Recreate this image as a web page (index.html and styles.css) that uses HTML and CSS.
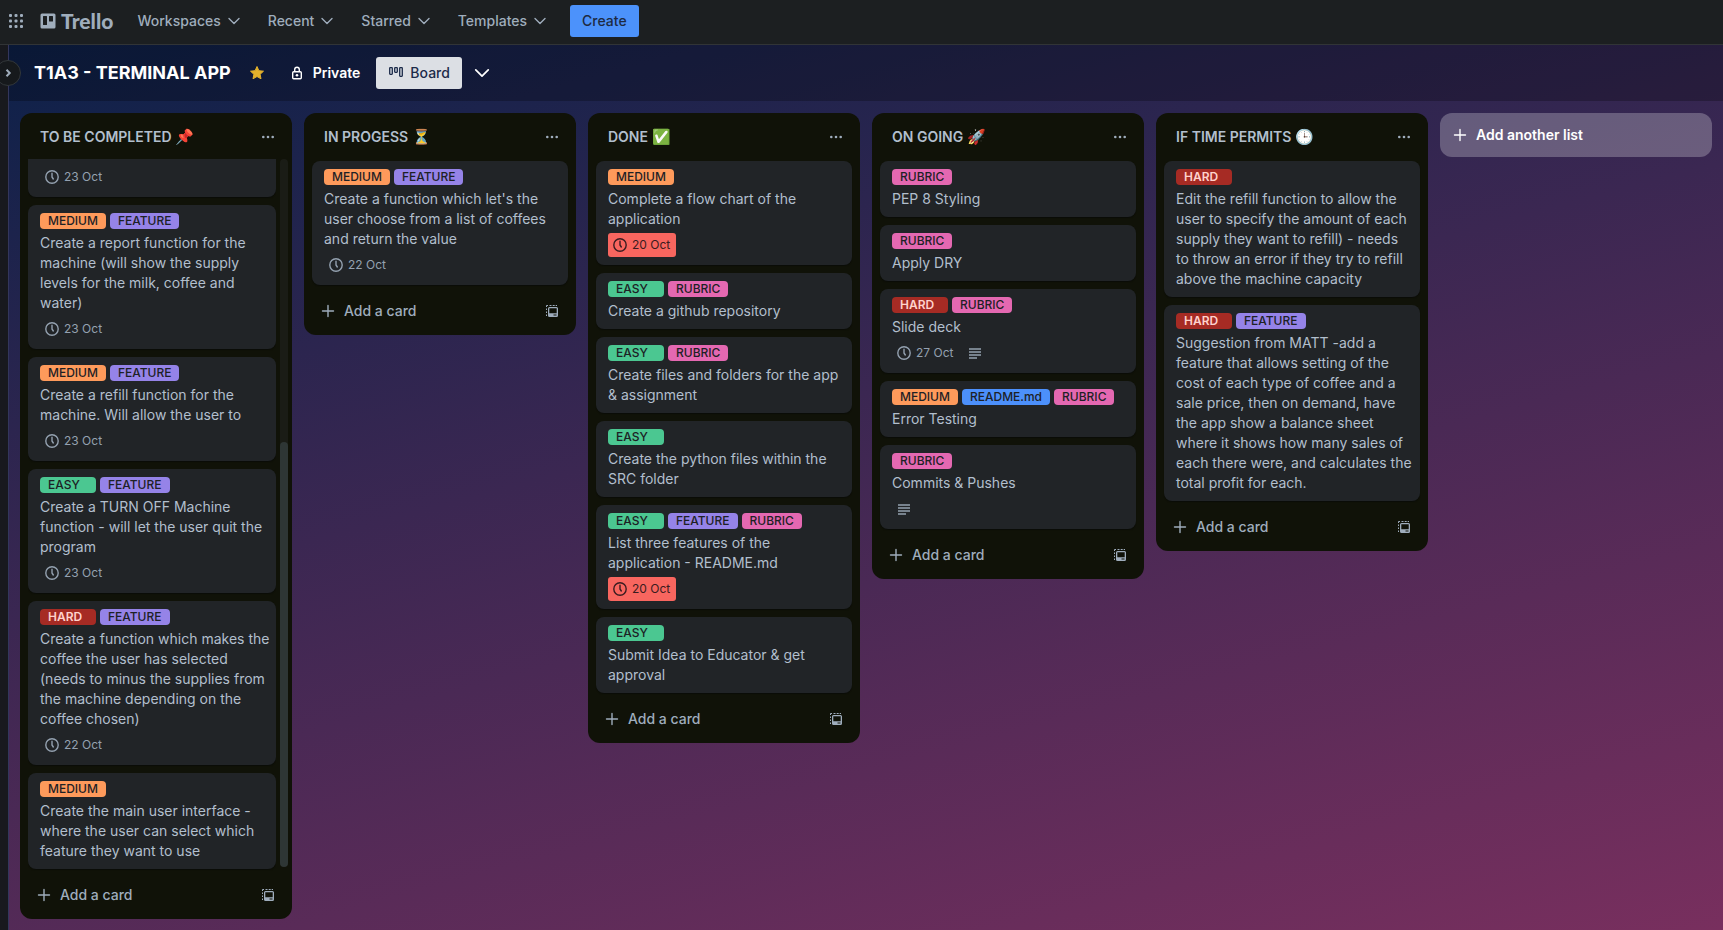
FILE: index.html
```
<!DOCTYPE html>
<html lang="en">
<head>
<meta charset="utf-8">
<title>T1A3 - TERMINAL APP | Trello</title>
<link rel="stylesheet" href="styles.css">
</head>
<body>
<svg class="sprite" aria-hidden="true">
  <symbol id="chevron" viewBox="0 0 16 16"><path d="M3 5.500 8 10.500l5-5" fill="none" stroke="currentColor" stroke-width="1.400" stroke-linecap="round" stroke-linejoin="round"/></symbol>
  <symbol id="clock" viewBox="0 0 16 16"><circle cx="8" cy="8" r="6.200" fill="none" stroke="currentColor" stroke-width="1.400"/><path d="M8 4.300V8l1.300 2" fill="none" stroke="currentColor" stroke-width="1.400" stroke-linecap="round" stroke-linejoin="round"/></symbol>
  <symbol id="lines" viewBox="0 0 16 16"><path d="M2 4h12M2 7h12M2 10h12M2 13h8" fill="none" stroke="currentColor" stroke-width="1.500"/></symbol>
  <symbol id="plus" viewBox="0 0 16 16"><path d="M8 2.500v11M2.500 8h11" fill="none" stroke="currentColor" stroke-width="1.400" stroke-linecap="round"/></symbol>
  <symbol id="dots" viewBox="0 0 16 16"><g fill="currentColor"><circle cx="3.300" cy="8" r="1.300"/><circle cx="8" cy="8" r="1.300"/><circle cx="12.700" cy="8" r="1.300"/></g></symbol>
  <symbol id="template" viewBox="0 0 16 16"><path fill="currentColor" fill-rule="evenodd" d="M5.500 4h7A1.500 1.500 0 0 1 14 5.500v7a1.500 1.500 0 0 1-1.500 1.500h-7A1.500 1.500 0 0 1 4 12.500v-7A1.500 1.500 0 0 1 5.500 4Zm-.2 1.300v5h7.400v-5Zm4.200 6.200v1h3v-1Z"/><path d="M2.500 13v-1.500M2.500 10V8.500M2.500 7V5.500M2.500 4V2.500H4M5.500 2.500H7.500M8.700 2.500h2M11.700 2.500H13" fill="none" stroke="currentColor"/></symbol>
</svg>

<header class="topbar">
  <button class="apps" aria-label="Switch apps"><svg class="icon" viewBox="0 0 16 16"><g fill="currentColor"><rect x="1" y="1" width="3" height="3" rx="1"/><rect x="6.500" y="1" width="3" height="3" rx="1"/><rect x="12" y="1" width="3" height="3" rx="1"/><rect x="1" y="6.500" width="3" height="3" rx="1"/><rect x="6.500" y="6.500" width="3" height="3" rx="1"/><rect x="12" y="6.500" width="3" height="3" rx="1"/><rect x="1" y="12" width="3" height="3" rx="1"/><rect x="6.500" y="12" width="3" height="3" rx="1"/><rect x="12" y="12" width="3" height="3" rx="1"/></g></svg></button>
  <a class="logo" href="#"><svg class="icon" viewBox="0 0 16 16"><path fill="currentColor" fill-rule="evenodd" d="M2 .5h12A1.500 1.500 0 0 1 15.500 2v12a1.500 1.500 0 0 1-1.500 1.500H2A1.500 1.500 0 0 1 .5 14V2A1.500 1.500 0 0 1 2 .5ZM3.500 3a.5.5 0 0 0-.5.5v8a.5.5 0 0 0 .5.5h3a.5.5 0 0 0 .5-.5v-8a.5.5 0 0 0-.5-.5Zm6 0a.5.5 0 0 0-.5.5v4.500a.5.5 0 0 0 .5.5h3a.5.5 0 0 0 .5-.5V3.500a.5.5 0 0 0-.5-.5Z"/></svg><span>Trello</span></a>
  <nav class="menu">
    <button>Workspaces<svg class="icon"><use href="#chevron"/></svg></button>
    <button>Recent<svg class="icon"><use href="#chevron"/></svg></button>
    <button>Starred<svg class="icon"><use href="#chevron"/></svg></button>
    <button>Templates<svg class="icon"><use href="#chevron"/></svg></button>
  </nav>
  <button class="create">Create</button>
</header>

<div class="workspace">
  <aside class="sidebar"><button class="expand" aria-label="Expand sidebar"><svg class="icon" viewBox="0 0 16 16"><path d="m6.500 4.800 3.200 3.200-3.200 3.200" fill="none" stroke="currentColor" stroke-width="2"/></svg></button></aside>
  <main class="board">
    <div class="board-bar">
      <h1>T1A3 - TERMINAL APP</h1>
      <button class="star" aria-label="Starred"><svg class="icon" viewBox="0 0 16 16"><path fill="currentColor" stroke="currentColor" stroke-linejoin="round" d="m8 1.500 1.900 4.200 4.600.5-3.400 3.100.9 4.500L8 11.500l-4 2.300.9-4.500L1.500 6.200l4.600-.5Z"/></svg></button>
      <button class="private"><svg class="icon" viewBox="0 0 16 16"><g fill="none" stroke="currentColor" stroke-width="1.400"><rect x="3.700" y="6.700" width="8.600" height="7.100" rx="1"/><path d="M5.700 6.500V4.500a2.300 2.300 0 0 1 4.600 0v2"/></g><circle cx="8" cy="10.200" r="1.300" fill="currentColor"/></svg>Private</button>
      <button class="view"><svg class="icon" viewBox="0 0 16 16"><g fill="none" stroke="currentColor" stroke-width="1.300"><rect x="1.700" y="2.700" width="2.600" height="6.600" rx=".5"/><rect x="6.700" y="2.700" width="2.600" height="4.600" rx=".5"/><rect x="11.700" y="2.700" width="2.600" height="8.600" rx=".5"/></g></svg>Board</button>
      <button class="views" aria-label="More views"><svg class="icon-large"><use href="#chevron"/></svg></button>
    </div>

    <div class="lists">
      <section class="list scrolling">
        <div class="list-head"><h2>TO BE COMPLETED <span class="emoji">📌</span></h2><button aria-label="List actions"><svg class="icon"><use href="#dots"/></svg></button></div>
        <div class="scroll-area">
          <div class="cards">
            <article class="card leading"><div class="badges"><span class="badge"><svg class="icon"><use href="#clock"/></svg>23 Oct</span></div></article>
            <article class="card"><div class="labels"><span class="label orange">MEDIUM</span><span class="label purple">FEATURE</span></div><p>Create a report function for the<br>machine (will show the supply<br>levels for the milk, coffee and<br>water)</p><div class="badges"><span class="badge"><svg class="icon"><use href="#clock"/></svg>23 Oct</span></div></article>
            <article class="card"><div class="labels"><span class="label orange">MEDIUM</span><span class="label purple">FEATURE</span></div><p>Create a refill function for the<br>machine. Will allow the user to</p><div class="badges"><span class="badge"><svg class="icon"><use href="#clock"/></svg>23 Oct</span></div></article>
            <article class="card"><div class="labels"><span class="label green">EASY</span><span class="label purple">FEATURE</span></div><p>Create a TURN OFF Machine<br>function - will let the user quit the<br>program</p><div class="badges"><span class="badge"><svg class="icon"><use href="#clock"/></svg>23 Oct</span></div></article>
            <article class="card"><div class="labels"><span class="label red">HARD</span><span class="label purple">FEATURE</span></div><p>Create a function which makes the<br>coffee the user has selected<br>(needs to minus the supplies from<br>the machine depending on the<br>coffee chosen)</p><div class="badges"><span class="badge"><svg class="icon"><use href="#clock"/></svg>22 Oct</span></div></article>
            <article class="card"><div class="labels"><span class="label orange">MEDIUM</span></div><p>Create the main user interface -<br>where the user can select which<br>feature they want to use</p></article>
          </div>
          <div class="track"><div class="thumb"></div></div>
        </div>
        <div class="list-foot"><button class="add"><svg class="icon"><use href="#plus"/></svg>Add a card</button><button aria-label="Create from template"><svg class="icon"><use href="#template"/></svg></button></div>
      </section>

      <section class="list">
        <div class="list-head"><h2>IN PROGESS <span class="emoji">⏳</span></h2><button aria-label="List actions"><svg class="icon"><use href="#dots"/></svg></button></div>
        <div class="cards">
          <article class="card"><div class="labels"><span class="label orange">MEDIUM</span><span class="label purple">FEATURE</span></div><p>Create a function which let's the<br>user choose from a list of coffees<br>and return the value</p><div class="badges"><span class="badge"><svg class="icon"><use href="#clock"/></svg>22 Oct</span></div></article>
        </div>
        <div class="list-foot"><button class="add"><svg class="icon"><use href="#plus"/></svg>Add a card</button><button aria-label="Create from template"><svg class="icon"><use href="#template"/></svg></button></div>
      </section>

      <section class="list">
        <div class="list-head"><h2>DONE <span class="emoji">✅</span></h2><button aria-label="List actions"><svg class="icon"><use href="#dots"/></svg></button></div>
        <div class="cards">
          <article class="card"><div class="labels"><span class="label orange">MEDIUM</span></div><p>Complete a flow chart of the<br>application</p><div class="badges"><span class="badge overdue"><svg class="icon"><use href="#clock"/></svg>20 Oct</span></div></article>
          <article class="card"><div class="labels"><span class="label green">EASY</span><span class="label pink">RUBRIC</span></div><p>Create a github repository</p></article>
          <article class="card"><div class="labels"><span class="label green">EASY</span><span class="label pink">RUBRIC</span></div><p>Create files and folders for the app<br>&amp; assignment</p></article>
          <article class="card"><div class="labels"><span class="label green">EASY</span></div><p>Create the python files within the<br>SRC folder</p></article>
          <article class="card"><div class="labels"><span class="label green">EASY</span><span class="label purple">FEATURE</span><span class="label pink">RUBRIC</span></div><p>List three features of the<br>application - README.md</p><div class="badges"><span class="badge overdue"><svg class="icon"><use href="#clock"/></svg>20 Oct</span></div></article>
          <article class="card"><div class="labels"><span class="label green">EASY</span></div><p>Submit Idea to Educator &amp; get<br>approval</p></article>
        </div>
        <div class="list-foot"><button class="add"><svg class="icon"><use href="#plus"/></svg>Add a card</button><button aria-label="Create from template"><svg class="icon"><use href="#template"/></svg></button></div>
      </section>

      <section class="list">
        <div class="list-head"><h2>ON GOING <span class="emoji">🚀</span></h2><button aria-label="List actions"><svg class="icon"><use href="#dots"/></svg></button></div>
        <div class="cards">
          <article class="card"><div class="labels"><span class="label pink">RUBRIC</span></div><p>PEP 8 Styling</p></article>
          <article class="card"><div class="labels"><span class="label pink">RUBRIC</span></div><p>Apply DRY</p></article>
          <article class="card"><div class="labels"><span class="label red">HARD</span><span class="label pink">RUBRIC</span></div><p>Slide deck</p><div class="badges"><span class="badge"><svg class="icon"><use href="#clock"/></svg>27 Oct</span><span class="badge"><svg class="icon"><use href="#lines"/></svg></span></div></article>
          <article class="card"><div class="labels"><span class="label orange">MEDIUM</span><span class="label blue">README.md</span><span class="label pink">RUBRIC</span></div><p>Error Testing</p></article>
          <article class="card"><div class="labels"><span class="label pink">RUBRIC</span></div><p>Commits &amp; Pushes</p><div class="badges"><span class="badge"><svg class="icon"><use href="#lines"/></svg></span></div></article>
        </div>
        <div class="list-foot"><button class="add"><svg class="icon"><use href="#plus"/></svg>Add a card</button><button aria-label="Create from template"><svg class="icon"><use href="#template"/></svg></button></div>
      </section>

      <section class="list">
        <div class="list-head"><h2>IF TIME PERMITS <span class="emoji">🕒</span></h2><button aria-label="List actions"><svg class="icon"><use href="#dots"/></svg></button></div>
        <div class="cards">
          <article class="card"><div class="labels"><span class="label red">HARD</span></div><p>Edit the refill function to allow the<br>user to specify the amount of each<br>supply they want to refill) - needs<br>to throw an error if they try to refill<br>above the machine capacity</p></article>
          <article class="card"><div class="labels"><span class="label red">HARD</span><span class="label purple">FEATURE</span></div><p>Suggestion from MATT -add a<br>feature that allows setting of the<br>cost of each type of coffee and a<br>sale price, then on demand, have<br>the app show a balance sheet<br>where it shows how many sales of<br>each there were, and calculates the<br>total profit for each.</p></article>
        </div>
        <div class="list-foot"><button class="add"><svg class="icon"><use href="#plus"/></svg>Add a card</button><button aria-label="Create from template"><svg class="icon"><use href="#template"/></svg></button></div>
      </section>

      <button class="add-list"><svg class="icon"><use href="#plus"/></svg>Add another list</button>
    </div>
  </main>
</div>
</body>
</html>
```
FILE: styles.css
```
* { box-sizing: border-box; }
body {
  margin: 0;
  height: 100vh;
  display: flex;
  flex-direction: column;
  overflow: hidden;
  background: #1b1f22;
  color: #b2bfcd;
  font: 14px/20px Inter, "Liberation Sans", sans-serif;
}
h1, h2, p { margin: 0; }
button {
  display: flex;
  align-items: center;
  border: 0;
  padding: 0;
  background: none;
  color: inherit;
  font: inherit;
  font-weight: 500;
}
.sprite { position: absolute; width: 0; height: 0; }
.icon { width: 16px; height: 16px; flex: none; }
.icon-large { width: 20px; height: 20px; }

.topbar {
  display: flex;
  align-items: center;
  height: 45px;
  flex: none;
  padding: 0 8px 2px;
  border-bottom: 1px solid #313436;
  background: #1c1f21;
  color: #9fadbc;
}
.logo {
  display: flex;
  align-items: center;
  gap: 5px;
  margin: 0 12px 0 16px;
  color: inherit;
  text-decoration: none;
  font: 900 21px/24px Lato, sans-serif;
}
.menu { display: flex; gap: 4px; }
.menu button { height: 32px; gap: 5px; padding: 0 10px 0 12px; }
.create {
  height: 32px;
  margin-left: 12px;
  padding: 0 12px;
  border-radius: 3px;
  background: #4c92fb;
  color: #1d2a42;
}

.workspace { flex: 1; min-height: 0; display: flex; }
.sidebar {
  position: relative;
  z-index: 1;
  flex: none;
  width: 9px;
  border-right: 1px solid #33365c;
  background: #18191e;
}
.expand {
  position: absolute;
  top: 15px;
  left: -5px;
  width: 26px;
  height: 26px;
  justify-content: center;
  border: 1px solid #32373a;
  border-radius: 50%;
  background: #16191c;
  color: #9fadbc;
}
.board {
  flex: 1;
  min-width: 0;
  display: flex;
  flex-direction: column;
  background: linear-gradient(165deg, #0d2149 0%, #782f5e 100%);
}
.board-bar {
  display: flex;
  align-items: center;
  flex: none;
  height: 56px;
  padding: 0 25px;
  background: rgba(0, 0, 0, 0.25);
  color: #fff;
}
.board-bar h1 { font-size: 18px; line-height: 32px; font-weight: 700; }
.star { margin-left: 18px; color: #e2b02c; }
.private { margin: 0 16px 0 24px; gap: 8px; font-weight: 600; }
.view {
  height: 32px;
  gap: 6px;
  padding: 0 12px;
  border-radius: 3px;
  background: #dcdfe4;
  color: #1c2b4a;
}
.views { margin-left: 10px; }

.lists {
  flex: 1;
  min-height: 0;
  display: flex;
  align-items: flex-start;
  gap: 12px;
  padding: 12px 11px 11px;
}
.list {
  display: flex;
  flex-direction: column;
  flex: none;
  width: 272px;
  max-height: 100%;
  border-radius: 12px;
  background: #101208;
}
.list-head {
  display: flex;
  align-items: center;
  justify-content: space-between;
  flex: none;
  height: 46px;
  padding: 2px 8px 0 20px;
}
.list-head h2 { font-size: 14px; line-height: 20px; font-weight: 600; }
.emoji { font-size: 15px; }
.list-head button, .list-foot button { height: 32px; padding: 0 8px; color: #9fadbc; }
.cards {
  display: flex;
  flex-direction: column;
  gap: 8px;
  padding: 2px 8px;
}
.scroll-area {
  flex: 1;
  min-height: 0;
  display: flex;
  gap: 4px;
  padding: 0 4px 0 8px;
}
.scroll-area .cards {
  flex: 1;
  padding: 2px 0;
  justify-content: flex-end;
  overflow: hidden;
}
.track {
  display: flex;
  flex-direction: column;
  justify-content: flex-end;
  width: 8px;
  margin-bottom: 4px;
  border-radius: 4px;
  background: #1a1c16;
}
.thumb { height: 60%; border-radius: 4px; background: #2e3635; }
.card {
  flex: none;
  padding: 8px 4px 4px 12px;
  border-radius: 8px;
  background: #212427;
  box-shadow: 0 1px 1px #0b0d08;
}
.leading { padding-top: 72px; }
.card p { margin: 4px 0; overflow-wrap: break-word; }
.labels { display: flex; flex-wrap: wrap; gap: 4px; }
.label {
  min-width: 56px;
  height: 16px;
  padding: 0 8px;
  border-radius: 4px;
  color: #1d2125;
  font-size: 12px;
  line-height: 16px;
  font-weight: 500;
}
.orange { background: #fe9a5b; }
.purple { background: #9583e8; }
.green { background: #4bc791; }
.pink { background: #e468b1; }
.blue { background: #4c90fb; }
.red { background: #a62b24; color: #ffd2cc; font-weight: 600; }
.badges { display: flex; gap: 4px; margin-bottom: 4px; }
.badge {
  display: flex;
  align-items: center;
  gap: 4px;
  height: 24px;
  padding: 0 6px 0 4px;
  border-radius: 3px;
  color: #94a1b0;
  font-size: 12px;
}
.overdue { background: #f8665f; color: #3a1c20; }
.list-foot {
  display: flex;
  justify-content: space-between;
  flex: none;
  padding: 8px;
}
.list-foot .add { gap: 8px; }
.add-list {
  flex: none;
  width: 272px;
  height: 44px;
  gap: 8px;
  padding: 0 12px;
  border-radius: 12px;
  background: rgba(255, 255, 255, 0.25);
  color: #fff;
  font-weight: 600;
}
```
